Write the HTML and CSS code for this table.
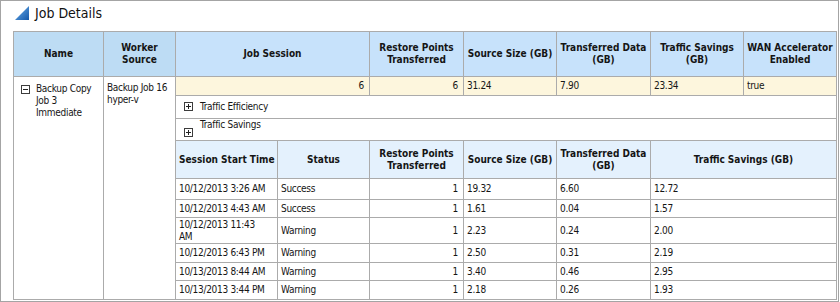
FILE: index.html
```html
<!DOCTYPE html>
<html lang="en">
<head>
    <meta charset="UTF-8">
    <title>Job Details</title>
    <link rel="stylesheet" href="styles.css">
</head>
<body>
    <div class="panel">
        <div class="panel-title">
            <svg class="title-icon" width="14" height="14" viewBox="0 0 14 14">
                <defs>
                    <linearGradient id="triGrad" x1="0" y1="0" x2="1" y2="1">
                        <stop offset="0" stop-color="#6fb3ee"/>
                        <stop offset="1" stop-color="#1457a8"/>
                    </linearGradient>
                </defs>
                <polygon points="14,0 14,14 0,14" fill="url(#triGrad)"/>
            </svg>
            <h2>Job Details</h2>
        </div>

        <table class="job-table">
            <colgroup>
                <col class="c-name">
                <col class="c-worker">
                <col class="c-start">
                <col class="c-status">
                <col class="c-restore">
                <col class="c-source">
                <col class="c-transferred">
                <col class="c-savings">
                <col class="c-wan">
            </colgroup>
            <thead>
                <tr class="head-row">
                    <th class="head-dark">Name</th>
                    <th class="head-dark">Worker<br>Source</th>
                    <th colspan="2">Job Session</th>
                    <th>Restore Points<br>Transferred</th>
                    <th>Source Size (GB)</th>
                    <th>Transferred Data<br>(GB)</th>
                    <th>Traffic Savings<br>(GB)</th>
                    <th>WAN Accelerator<br>Enabled</th>
                </tr>
            </thead>
            <tbody>
                <tr class="job-row">
                    <td rowspan="10" class="name-cell">
                        <div class="name-wrap">
                            <span class="tree-btn"></span>
                            <span class="name-text">Backup Copy Job 3 Immediate</span>
                        </div>
                    </td>
                    <td rowspan="10" class="worker-cell">Backup Job 16 hyper-v</td>
                    <td colspan="2" class="num">6</td>
                    <td class="num">6</td>
                    <td>31.24</td>
                    <td>7.90</td>
                    <td>23.34</td>
                    <td>true</td>
                </tr>
                <tr class="group-row">
                    <td colspan="7"><span class="tree-btn plus"></span>Traffic Efficiency</td>
                </tr>
                <tr class="group-row group-low">
                    <td colspan="7"><span class="tree-btn plus"></span><span class="group-label">Traffic Savings</span></td>
                </tr>
                <tr class="sub-head">
                    <th>Session Start Time</th>
                    <th>Status</th>
                    <th>Restore Points<br>Transferred</th>
                    <th>Source Size (GB)</th>
                    <th>Transferred Data<br>(GB)</th>
                    <th colspan="2">Traffic Savings (GB)</th>
                </tr>
                <tr class="session-row first">
                    <td>10/12/2013 3:26 AM</td>
                    <td>Success</td>
                    <td class="num">1</td>
                    <td>19.32</td>
                    <td>6.60</td>
                    <td colspan="2">12.72</td>
                </tr>
                <tr class="session-row short">
                    <td>10/12/2013 4:43 AM</td>
                    <td>Success</td>
                    <td class="num">1</td>
                    <td>1.61</td>
                    <td>0.04</td>
                    <td colspan="2">1.57</td>
                </tr>
                <tr class="session-row two-line">
                    <td>10/12/2013 11:43<br>AM</td>
                    <td>Warning</td>
                    <td class="num">1</td>
                    <td>2.23</td>
                    <td>0.24</td>
                    <td colspan="2">2.00</td>
                </tr>
                <tr class="session-row">
                    <td>10/12/2013 6:43 PM</td>
                    <td>Warning</td>
                    <td class="num">1</td>
                    <td>2.50</td>
                    <td>0.31</td>
                    <td colspan="2">2.19</td>
                </tr>
                <tr class="session-row short">
                    <td>10/13/2013 8:44 AM</td>
                    <td>Warning</td>
                    <td class="num">1</td>
                    <td>3.40</td>
                    <td>0.46</td>
                    <td colspan="2">2.95</td>
                </tr>
                <tr class="session-row">
                    <td>10/13/2013 3:44 PM</td>
                    <td>Warning</td>
                    <td class="num">1</td>
                    <td>2.18</td>
                    <td>0.26</td>
                    <td colspan="2">1.93</td>
                </tr>
            </tbody>
        </table>
    </div>
</body>
</html>
```

FILE: styles.css
```css
* {
    margin: 0;
    padding: 0;
    box-sizing: border-box;
}

body {
    font-family: "DejaVu Sans Condensed", "DejaVu Sans", sans-serif;
    font-size: 10px;
    color: #161616;
    background: white;
}

.panel {
    width: 839px;
    height: 302px;
    border: 1px solid #a4a4a4;
    overflow: hidden;
}

.panel-title {
    display: flex;
    align-items: center;
    height: 22px;
    padding-left: 14px;
    margin-top: 1px;
}

.title-icon {
    margin-right: 6px;
    margin-top: -1px;
}

.panel-title h2 {
    font-size: 14px;
    font-weight: normal;
    color: #111;
}

.job-table {
    margin: 7px 0 0 12px;
    width: 823px;
    table-layout: fixed;
    border-collapse: collapse;
}

.c-name { width: 90px; }
.c-worker { width: 72px; }
.c-start { width: 102px; }
.c-status { width: 92px; }
.c-restore { width: 94px; }
.c-source { width: 93px; }
.c-transferred { width: 94px; }
.c-savings { width: 93px; }
.c-wan { width: 93px; }

.job-table th,
.job-table td {
    border: 1px solid #ababab;
    line-height: 12px;
    padding: 1px 3px;
    white-space: nowrap;
    overflow: hidden;
}

.job-table td {
    letter-spacing: -0.3px;
}

.job-table th {
    font-weight: bold;
    text-align: center;
    color: #151515;
}

.head-row {
    height: 45px;
}

.head-row th {
    background: #c7e2fb;
}

.head-row th.head-dark {
    background: #bddcf4;
}

.job-row {
    height: 19px;
}

.job-row td {
    background: #fdf6dd;
}

.job-row td.name-cell,
.job-row td.worker-cell {
    background: white;
    vertical-align: top;
    white-space: normal;
}

.name-cell {
    padding: 6px 3px 0 7px !important;
}

.name-wrap {
    display: flex;
    align-items: flex-start;
    gap: 6px;
}

.name-wrap .tree-btn {
    margin-top: 2px;
    flex-shrink: 0;
}

.worker-cell {
    padding-top: 5px !important;
}

.num {
    text-align: right;
    padding-right: 5px !important;
}

.tree-btn {
    display: inline-block;
    position: relative;
    width: 9px;
    height: 9px;
    border: 1px solid #3c3c3c;
    background: white;
    vertical-align: -1px;
}

.tree-btn::before {
    content: "";
    position: absolute;
    left: 1px;
    top: 3px;
    width: 5px;
    height: 1px;
    background: #222;
}

.tree-btn.plus::after {
    content: "";
    position: absolute;
    left: 3px;
    top: 1px;
    width: 1px;
    height: 5px;
    background: #222;
}

.group-row {
    height: 23px;
}

.group-row td {
    padding-left: 8px;
    background: white;
}

.group-row .tree-btn {
    margin-right: 7px;
}

.group-low {
    height: 22px;
}

.group-low td {
    padding-top: 0;
}

.group-low .tree-btn {
    vertical-align: -6px;
}

.group-label {
    position: relative;
    top: -3px;
}

.sub-head {
    height: 38px;
}

.sub-head th {
    background: #e4f1fd;
}

.session-row {
    height: 19px;
}

.session-row.short {
    height: 18px;
}

.session-row.first {
    height: 21px;
}

.session-row.two-line {
    height: 26px;
}

.session-row.two-line td {
    padding-top: 0;
    padding-bottom: 0;
}

.session-row td {
    background: white;
}
```
